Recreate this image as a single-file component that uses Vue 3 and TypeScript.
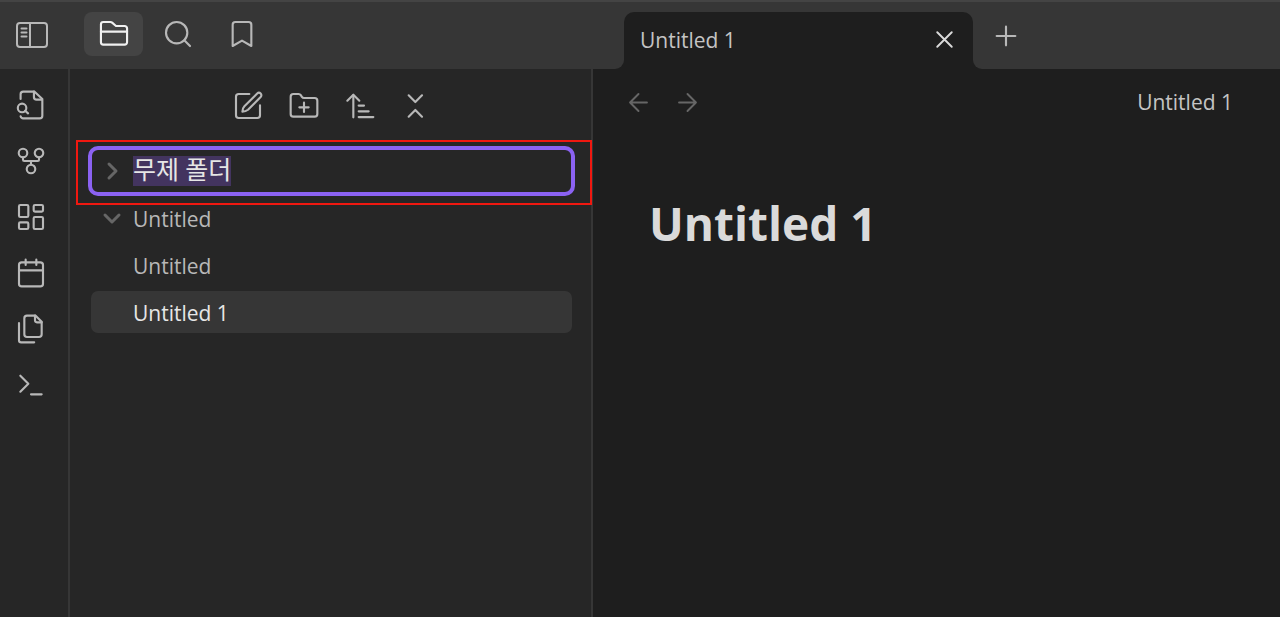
<script setup lang="ts">
import { onMounted, ref } from 'vue'

interface Action {
  label: string
  paths: string[]
}

const folderName = ref('무제 폴더')
const renameBox = ref<HTMLInputElement | null>(null)

const views: Action[] = [
  {
    label: 'Files',
    paths: [
      'M4 20h16a1.8 1.8 0 0 0 1.8-1.800V7.800A1.800 1.800 0 0 0 20 6h-6.500L10.600 3.500a2 2 0 0 0-1.300-.5H4a1.800 1.800 0 0 0-1.800 1.800v13.400A1.800 1.800 0 0 0 4 20Z',
      'M2.200 10.200h19.600',
    ],
  },
  { label: 'Search', paths: ['M19 11a8 8 0 1 1-16 0a8 8 0 1 1 16 0', 'M21 21l-4.300-4.300'] },
  { label: 'Bookmarks', paths: ['M19 21l-7-4-7 4V5a2 2 0 0 1 2-2h10a2 2 0 0 1 2 2v16z'] },
]

const ribbon: Action[] = [
  {
    label: 'Open quick switcher',
    paths: [
      'M4.200 7.500V4a2 2 0 0 1 2-2h8.500L20.500 7.500V20a2 2 0 0 1-2 2H6.200a2 2 0 0 1-2-1.500',
      'M14.200 2v4a2 2 0 0 0 2 2h4',
      'M8.500 14.200a3.200 3.200 0 1 1-6.400 0a3.200 3.200 0 1 1 6.400 0',
      'M9.800 18.300l-2.200-2',
    ],
  },
  {
    label: 'Open graph view',
    paths: [
      'M15.200 18a3.200 3.200 0 1 1-6.400 0a3.200 3.200 0 1 1 6.400 0',
      'M9.200 6a3.200 3.200 0 1 1-6.400 0a3.200 3.200 0 1 1 6.400 0',
      'M21.200 6a3.200 3.200 0 1 1-6.400 0a3.200 3.200 0 1 1 6.400 0',
      'M18 9.200V11a1 1 0 0 1-1 1H7a1 1 0 0 1-1-1V9.200',
      'M12 12v2.800',
    ],
  },
  {
    label: 'Create new canvas',
    paths: [
      'M4 3h5a1 1 0 0 1 1 1v7a1 1 0 0 1-1 1H4a1 1 0 0 1-1-1V4a1 1 0 0 1 1-1z',
      'M15 3h5a1 1 0 0 1 1 1v3a1 1 0 0 1-1 1h-5a1 1 0 0 1-1-1V4a1 1 0 0 1 1-1z',
      'M15 12h5a1 1 0 0 1 1 1v7a1 1 0 0 1-1 1h-5a1 1 0 0 1-1-1v-7a1 1 0 0 1 1-1z',
      'M4 16h5a1 1 0 0 1 1 1v3a1 1 0 0 1-1 1H4a1 1 0 0 1-1-1v-3a1 1 0 0 1 1-1z',
    ],
  },
  {
    label: "Open today's daily note",
    paths: [
      'M5 4h14a2 2 0 0 1 2 2v14a2 2 0 0 1-2 2H5a2 2 0 0 1-2-2V6a2 2 0 0 1 2-2z',
      'M16 2v4',
      'M8 2v4',
      'M3 10h18',
    ],
  },
  {
    label: 'Insert template',
    paths: [
      'M15.500 2H9a2 2 0 0 0-2 2v12a2 2 0 0 0 2 2h9a2 2 0 0 0 2-2V6.500L15.500 2z',
      'M3 7.600V20.400A1.600 1.600 0 0 0 4.600 22h9.800',
      'M15 2v3.500A1.500 1.500 0 0 0 16.500 7H20',
    ],
  },
  { label: 'Open command palette', paths: ['M4 17l6-6-6-6', 'M12 19h8'] },
]

const tools: Action[] = [
  {
    label: 'New note',
    paths: [
      'M13 3H5a2 2 0 0 0-2 2v14a2 2 0 0 0 2 2h14a2 2 0 0 0 2-2v-7.500',
      'M18.900 2.600a1.800 1.800 0 0 1 2.600 2.600L12 14.800Q10.300 16.200 7.800 16.300Q7.800 13.700 9.300 12.200Z',
    ],
  },
  {
    label: 'New folder',
    paths: [
      'M4 20h16a2 2 0 0 0 2-2V8a2 2 0 0 0-2-2h-7.930a2 2 0 0 1-1.660-.9l-.82-1.200A2 2 0 0 0 7.930 3H4a2 2 0 0 0-2 2v13c0 1.100.9 2 2 2Z',
      'M12 9.500v7',
      'M8.500 13h7',
    ],
  },
  {
    label: 'Change sort order',
    paths: ['M2.500 8L7 3.500L11.500 8', 'M7 4v16.500', 'M11 11.700h4', 'M11 16h7.500', 'M11 20.300h11'],
  },
  { label: 'Collapse all', paths: ['M6.500 20l5-5 5 5', 'M6.500 4l5 5 5-5'] },
]

onMounted(() => {
  renameBox.value?.focus()
  renameBox.value?.select()
})
</script>

<template>
  <div class="app">
    <header class="titlebar">
      <div class="titlebar-left">
        <button class="icon-button" type="button" aria-label="Toggle sidebar">
          <svg class="icon" viewBox="0 0 32 32">
            <rect x="1" y="4" width="30" height="24" rx="3" />
            <path d="M14 4v24M5.500 9.500h5M5.500 13.500h5M5.500 17.500h5" />
          </svg>
        </button>
        <nav class="views" aria-label="Sidebar views">
          <button
            v-for="(view, i) in views"
            :key="view.label"
            class="view-button"
            :class="{ active: i === 0 }"
            type="button"
            :aria-label="view.label"
          >
            <svg class="icon" viewBox="0 0 24 24">
              <path v-for="d in view.paths" :key="d" :d="d" />
            </svg>
          </button>
        </nav>
      </div>
      <div class="tab-slot">
        <div class="tab">
          <span class="tab-name">Untitled 1</span>
          <button class="icon-button close" type="button" aria-label="Close tab">
            <svg class="icon" viewBox="0 0 24 24"><path d="M18 6L6 18M6 6l12 12" /></svg>
          </button>
        </div>
      </div>
      <div class="titlebar-right">
        <button class="icon-button" type="button" aria-label="New tab">
          <svg class="icon" viewBox="0 0 24 24"><path d="M5 12h14M12 5v14" /></svg>
        </button>
      </div>
    </header>

    <div class="workspace">
      <nav class="ribbon" aria-label="Ribbon">
        <button
          v-for="item in ribbon"
          :key="item.label"
          class="icon-button"
          type="button"
          :aria-label="item.label"
        >
          <svg class="icon" viewBox="0 0 24 24">
            <path v-for="d in item.paths" :key="d" :d="d" />
          </svg>
        </button>
      </nav>

      <aside class="sidebar">
        <div class="tools">
          <button
            v-for="tool in tools"
            :key="tool.label"
            class="icon-button"
            type="button"
            :aria-label="tool.label"
          >
            <svg class="icon" viewBox="0 0 24 24">
              <path v-for="d in tool.paths" :key="d" :d="d" />
            </svg>
          </button>
        </div>
        <div class="tree">
          <div class="row renaming">
            <svg class="chevron" viewBox="0 0 20 20"><path d="M7 3l7 7-7 7" /></svg>
            <input
              ref="renameBox"
              v-model="folderName"
              class="rename"
              type="text"
              aria-label="Folder name"
              spellcheck="false"
            />
            <div class="callout"></div>
          </div>
          <button class="row" type="button" aria-expanded="true">
            <svg class="chevron" viewBox="0 0 20 20"><path d="M3 6l7 7 7-7" /></svg>
            <span>Untitled</span>
          </button>
          <button class="row file" type="button">Untitled</button>
          <button class="row file selected" type="button">Untitled 1</button>
        </div>
      </aside>

      <main class="editor">
        <div class="editor-bar">
          <div class="history">
            <button class="icon-button" type="button" aria-label="Back">
              <svg class="icon" viewBox="0 0 24 24"><path d="M12 19l-7-7 7-7M19 12H5" /></svg>
            </button>
            <button class="icon-button" type="button" aria-label="Forward">
              <svg class="icon" viewBox="0 0 24 24"><path d="M5 12h14M12 5l7 7-7 7" /></svg>
            </button>
          </div>
          <span class="note-name">Untitled 1</span>
        </div>
        <h1 class="title">Untitled 1</h1>
      </main>
    </div>
  </div>
</template>

<style>
body {
  margin: 0;
  background: #1e1e1e;
}
</style>

<style scoped>
.app {
  display: flex;
  flex-direction: column;
  min-height: 100vh;
  font-family: 'Open Sans', 'Noto Sans', 'Noto Sans CJK KR', sans-serif;
  font-size: 21px;
  line-height: 28px;
  color: #b8b8b8;
  background: #1e1e1e;
}

.app * {
  box-sizing: border-box;
}

button {
  margin: 0;
  padding: 0;
  border: 0;
  background: none;
  color: inherit;
  font: inherit;
}

.icon-button {
  display: flex;
  flex: none;
}

.icon {
  display: block;
  width: 32px;
  height: 32px;
  fill: none;
  stroke: currentColor;
  stroke-width: 1.6;
  stroke-linecap: round;
  stroke-linejoin: round;
}

.titlebar {
  display: flex;
  height: 69px;
}

.titlebar-left,
.tab-slot,
.titlebar-right {
  background: #363636;
  border-top: 2px solid #444444;
}

.titlebar-left {
  display: flex;
  flex: none;
  width: 624px;
  padding: 10px 16px 0;
  gap: 36px;
  border-bottom-right-radius: 9px;
}

.titlebar-left > .icon-button {
  padding-top: 7px;
}

.titlebar-left > .icon-button .icon {
  stroke-width: 2;
}

.views {
  display: flex;
  gap: 5px;
}

.view-button {
  display: flex;
  align-items: center;
  justify-content: center;
  width: 59px;
  height: 44px;
  border-radius: 8px;
}

.view-button.active {
  background: #444444;
  color: #f0f0f0;
}

.tab-slot {
  flex: none;
  width: 349px;
  padding-top: 10px;
}

.tab {
  display: flex;
  align-items: center;
  justify-content: space-between;
  height: 57px;
  padding: 0 14px 2px 16px;
  border-radius: 10px 10px 0 0;
  background: #1e1e1e;
}

.tab-name {
  color: #c4c4c4;
}

.close {
  color: #dadada;
}

.close .icon {
  width: 29px;
  height: 29px;
}

.titlebar-right {
  flex: 1;
  padding: 18px 17px 0;
  border-bottom-left-radius: 9px;
}

.workspace {
  display: flex;
  flex: 1;
}

.ribbon {
  display: flex;
  flex-direction: column;
  gap: 24px;
  width: 70px;
  padding: 20px 0 0 15px;
  background: #262626;
  border-right: 2px solid #363636;
}

.sidebar {
  width: 523px;
  background: #262626;
  border-right: 2px solid #363636;
}

.tools {
  display: flex;
  justify-content: center;
  gap: 24px;
  padding: 21px 0 24px 3px;
}

.tree {
  display: flex;
  flex-direction: column;
  gap: 5px;
  padding: 0 19px 0 21px;
}

.row {
  display: flex;
  align-items: center;
  gap: 11px;
  height: 42px;
  padding: 2px 11px 0;
  border-radius: 7px;
  text-align: left;
}

.file {
  padding-left: 42px;
}

.selected {
  background: #363636;
  color: #e6e6e6;
}

.renaming {
  position: relative;
  height: 50px;
  margin: 0 -3px -4px;
  padding: 0 10px;
  border: 4px solid #8b62f2;
  border-radius: 10px;
}

.chevron {
  flex: none;
  width: 20px;
  height: 20px;
  fill: none;
  stroke: #666666;
  stroke-width: 3;
  stroke-linecap: round;
  stroke-linejoin: round;
}

.rename {
  flex: 1;
  min-width: 0;
  height: 30px;
  padding: 0;
  border: 0;
  outline: 0;
  background: none;
  color: #e6e6e6;
  font-family: Roboto, 'Noto Sans CJK KR', sans-serif;
  font-size: 25px;
  line-height: 30px;
}

.rename::selection {
  background: #43345f;
  color: #e6e6e6;
}

.callout {
  position: absolute;
  inset: -10px -21px -13px -16px;
  border: 2px solid #f01810;
  pointer-events: none;
}

.editor {
  flex: 1;
  min-width: 0;
}

.editor-bar {
  display: flex;
  align-items: center;
  justify-content: space-between;
  height: 66px;
  padding: 0 47px 0 31px;
}

.history {
  display: flex;
  gap: 20px;
  color: #666666;
}

.history .icon {
  width: 29px;
  height: 29px;
}

.note-name {
  color: #c4c4c4;
}

.title {
  margin: 0;
  padding: 56px 47px 0 56px;
  color: #dadada;
  font-size: 46px;
  font-weight: 700;
  line-height: 64px;
}
</style>
